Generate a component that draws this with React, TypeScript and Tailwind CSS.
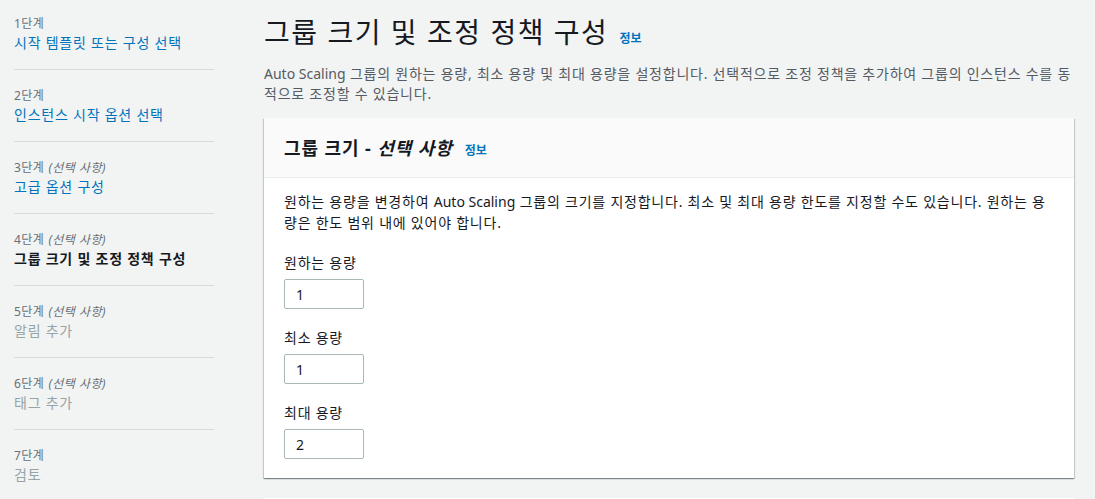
import React from 'react';

const font = { fontFamily: '"Noto Sans", "Noto Sans CJK KR", sans-serif' };

type Step = {
    num: string;
    optional?: boolean;
    title: string;
    state: 'done' | 'current' | 'future';
};

const steps: Step[] = [
    { num: '1단계', title: '시작 템플릿 또는 구성 선택', state: 'done' },
    { num: '2단계', title: '인스턴스 시작 옵션 선택', state: 'done' },
    { num: '3단계', optional: true, title: '고급 옵션 구성', state: 'done' },
    { num: '4단계', optional: true, title: '그룹 크기 및 조정 정책 구성', state: 'current' },
    { num: '5단계', optional: true, title: '알림 추가', state: 'future' },
    { num: '6단계', optional: true, title: '태그 추가', state: 'future' },
    { num: '7단계', title: '검토', state: 'future' },
];

// Latin runs keep normal spacing; the hangul around them is tracked out a little
const Latin = ({ children }: { children: React.ReactNode }) => (
    <span className="tracking-normal">{children}</span>
);

function StepItem({ step }: { step: Step }) {
    const titleClass =
        step.state === 'done'
            ? 'text-[#0073bb]'
            : step.state === 'current'
              ? 'text-[#16191f] font-bold'
              : 'text-[#95a5a6]';
    return (
        <li className="pt-[18px] first:pt-0 pb-[16px] border-b border-[#d5dbdb] last:border-b-0">
            <div className="text-[12px] leading-[16px] text-[#687078] tracking-[0.04em]">
                {step.num}
                {step.optional && <i className="ml-[4px]">(선택 사항)</i>}
            </div>
            <div className={`mt-[1px] text-[14px] leading-[20px] tracking-[0.055em] ${titleClass}`}>{step.title}</div>
        </li>
    );
}

function CapacityField({ label, value }: { label: string; value: string }) {
    return (
        <div className="mt-[19px] first-of-type:mt-[20px]">
            <div className="text-[14px] leading-[20px] text-[#16191f] tracking-[0.055em]">{label}</div>
            <input
                readOnly
                defaultValue={value}
                className="mt-[6px] block w-[80px] h-[30px] pl-[11px] text-[14px] text-[#16191f] bg-white border border-[#aab7b8] rounded-[2px] outline-none"
                style={font}
            />
        </div>
    );
}

export default function App() {
    return (
        <div className="w-[1095px] h-[499px] overflow-hidden bg-[#f2f3f3] flex" style={font}>
            {/* Wizard steps */}
            <nav className="w-[264px] shrink-0 pt-[16px] pl-[14px]">
                <ol className="w-[200px]">
                    {steps.map((s) => (
                        <StepItem key={s.num} step={s} />
                    ))}
                </ol>
            </nav>

            {/* Main content */}
            <main className="w-[810px] shrink-0">
                <h1 className="mt-[14px] h-[36px] text-[28px] leading-[36px] text-[#16191f] font-normal tracking-[0.055em] whitespace-nowrap">
                    그룹 크기 및 조정 정책 구성
                    <a className="ml-[11px] text-[12px] leading-none font-bold text-[#0073bb] tracking-normal">정보</a>
                </h1>
                <p className="mt-[14px] text-[14px] leading-[20px] text-[#545b64] tracking-[0.055em]">
                    <Latin>Auto Scaling</Latin> 그룹의 원하는 용량, 최소 용량 및 최대 용량을 설정합니다. 선택적으로 조정 정책을 추가하여 그룹의 인스턴스 수를 동적으로 조정할 수 있습니다.
                </p>

                <section className="mt-[14px] bg-white shadow-[0_1px_1px_0_rgba(0,28,36,0.3),1px_1px_1px_0_rgba(0,28,36,0.15),-1px_1px_1px_0_rgba(0,28,36,0.15)]">
                    <header className="h-[60px] px-[20px] flex items-center bg-[#fafafa] border-b border-[#eaeded]">
                        <h2 className="text-[18px] leading-[24px] font-bold text-[#16191f] tracking-[0.05em] whitespace-nowrap">
                            그룹 크기 - <i>선택 사항</i>
                            <a className="ml-[12px] text-[12px] leading-none font-bold text-[#0073bb] tracking-normal">정보</a>
                        </h2>
                    </header>
                    <div className="px-[20px] pt-[13px] pb-[19px]">
                        <p className="text-[14px] leading-[21px] text-[#16191f] tracking-[0.055em]">
                            원하는 용량을 변경하여 <Latin>Auto Scaling</Latin> 그룹의 크기를 지정합니다. 최소 및 최대 용량 한도를 지정할 수도 있습니다. 원하는 용량은 한도 범위 내에 있어야 합니다.
                        </p>
                        <div className="mt-[20px]">
                            <div className="text-[14px] leading-[20px] text-[#16191f] tracking-[0.055em]">원하는 용량</div>
                            <input
                                readOnly
                                defaultValue="1"
                                className="mt-[6px] block w-[80px] h-[30px] pl-[11px] text-[14px] text-[#16191f] bg-white border border-[#aab7b8] rounded-[2px] outline-none"
                                style={font}
                            />
                        </div>
                        <CapacityField label="최소 용량" value="1" />
                        <CapacityField label="최대 용량" value="2" />
                    </div>
                </section>

                <div className="mt-[20px] h-[20px] bg-white shadow-[0_1px_1px_0_rgba(0,28,36,0.3)]" />
            </main>
        </div>
    );
}
